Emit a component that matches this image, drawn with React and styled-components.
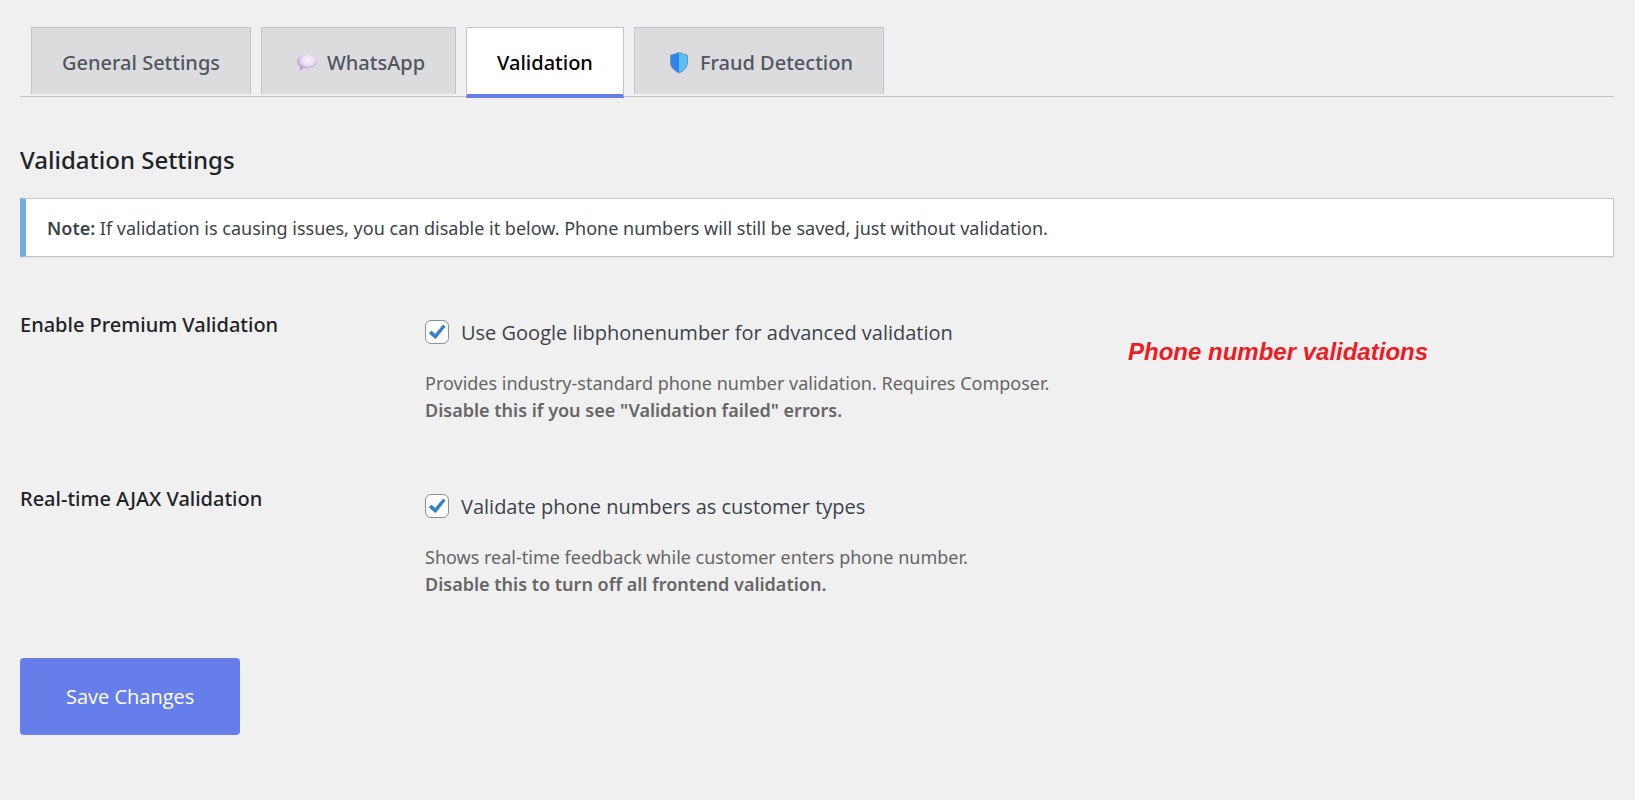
import React, { useState } from 'react';
import styled, { createGlobalStyle } from 'styled-components';

const GlobalStyle = createGlobalStyle`
  *, *::before, *::after { box-sizing: border-box; }
  body {
    margin: 0;
    background: #f0f0f0;
    color: #3c434a;
    font-family: "Open Sans", "Noto Sans", sans-serif;
    font-size: 20px;
    line-height: 30px;
  }
`;

const medium = '"Noto Sans", "Open Sans", sans-serif';

const Page = styled.div`
  padding: 27px 21px 40px 20px;
`;

const Tabs = styled.nav`
  display: flex;
  align-items: flex-start;
  gap: 10px;
  height: 70px;
  padding-left: 11px;
  border-bottom: 1px solid #c3c4c7;
`;

const Tab = styled.a`
  display: flex;
  align-items: center;
  gap: 7px;
  padding: 20px 30px 16px;
  border: 1px solid #c3c4c7;
  border-bottom: ${({ $active }) => ($active ? '4px solid #667eea' : '0')};
  background: ${({ $active }) => ($active ? '#fff' : '#dcdcde')};
  color: ${({ $active }) => ($active ? '#000' : '#50575e')};
  font-family: ${medium};
  font-weight: 500;
  text-decoration: none;
  white-space: nowrap;
`;

const TabIcon = styled.svg`
  width: 28px;
  height: 24px;
`;

const Title = styled.h2`
  margin: 46px 0 22px;
  color: #1d2327;
  font-family: ${medium};
  font-size: 24px;
  font-weight: 500;
  line-height: 33px;
`;

const Notice = styled.p`
  margin: 0;
  padding: 14px 21px 13px;
  border: 1px solid #c3c4c7;
  border-left: 6px solid #72aee6;
  background: #fff;
  box-shadow: 0 1px 1px rgba(0, 0, 0, 0.04);
  font-family: ${medium};
  font-size: 18px;

  strong { font-weight: 600; }
`;

const Form = styled.form`
  padding-top: 31px;
`;

const Row = styled.div`
  display: grid;
  grid-template-columns: 405px minmax(0, 703px) auto;
  justify-content: start;
  padding: 22px 0 38px;
`;

const RowLabel = styled.label`
  color: #1d2327;
  font-family: ${medium};
  font-weight: 500;
`;

const Field = styled.div`
  padding-top: 8px;
`;

const Option = styled.label`
  display: flex;
  align-items: center;
  gap: 12px;
`;

const CheckWrap = styled.span`
  display: grid;
  width: 24px;
  height: 24px;
  margin-bottom: 2px;

  > * { grid-area: 1 / 1; }
`;

const Checkbox = styled.input`
  appearance: none;
  width: 24px;
  height: 24px;
  margin: 0;
  border: 1px solid #8c8f94;
  border-radius: 6px;
  background: #fff;
`;

const Tick = styled.svg`
  width: 24px;
  height: 24px;
  pointer-events: none;
`;

const Description = styled.p`
  margin: 22px 0 0;
  color: #666;
  font-family: ${medium};
  font-size: 18px;
  line-height: 27px;

  strong {
    display: block;
    font-weight: 600;
  }
`;

const Annotation = styled.em`
  padding-top: 27px;
  color: #ed1c24;
  font-family: "Liberation Sans", Arial, sans-serif;
  font-size: 24px;
  font-weight: 700;
  white-space: nowrap;
`;

const SaveButton = styled.button`
  margin-top: 22px;
  padding: 24px 46px 23px;
  border: 0;
  border-radius: 4px;
  background: #667eea;
  color: #fff;
  font: inherit;
`;

function BubbleIcon() {
  return (
    <TabIcon viewBox="0 0 28 24" aria-hidden="true">
      <defs>
        <radialGradient id="bubble" cx="55%" cy="36%" r="60%">
          <stop offset="0" stopColor="#f8f3fc" />
          <stop offset="0.55" stopColor="#e8dcf2" />
          <stop offset="1" stopColor="#b39bcc" />
        </radialGradient>
      </defs>
      <path
        d="M15 3.700c5.700 0 10.100 3 10.100 6.900s-4.400 6.900-10.100 6.900c-1.200 0-2.400-.1-3.400-.4-.9 1-2 1.700-3.500 1.900-.5 0-.6-.4-.3-.8.4-.6.5-1.500.4-2.300C6.200 14.700 4.900 12.700 4.900 10.600 4.900 6.700 9.300 3.700 15 3.700z"
        fill="url(#bubble)"
      />
    </TabIcon>
  );
}

function ShieldIcon() {
  return (
    <TabIcon viewBox="0 0 28 24" aria-hidden="true">
      <path
        d="M14 1.500c2.300 0 3.200 1.800 7.300 2.200.8.100 1.200.5 1.200 1.300v6.500c0 4.500-3.500 8.100-8.500 10.600-5-2.500-8.500-6.100-8.500-10.600V5c0-.8.4-1.200 1.200-1.300 4.100-.4 5-2.200 7.300-2.200z"
        fill="#2f83e8"
      />
      <path
        d="M14 1.500c2.300 0 3.200 1.800 7.300 2.200.8.100 1.200.5 1.200 1.300v6.500c0 4.500-3.500 8.100-8.500 10.600z"
        fill="#57c3fb"
      />
      <path
        d="M14 1.500c2.300 0 3.200 1.800 7.300 2.200.8.100 1.200.5 1.200 1.300v6.500c0 4.500-3.500 8.100-8.500 10.600-5-2.500-8.500-6.100-8.500-10.600V5c0-.8.4-1.200 1.200-1.300 4.100-.4 5-2.200 7.300-2.200z"
        fill="none"
        stroke="#7c92ab"
        strokeWidth="0.900"
      />
    </TabIcon>
  );
}

function Setting({ id, title, option, description, warning, note }) {
  const [checked, setChecked] = useState(true);
  return (
    <Row>
      <RowLabel htmlFor={id}>{title}</RowLabel>
      <Field>
        <Option>
          <CheckWrap>
            <Checkbox
              id={id}
              type="checkbox"
              checked={checked}
              onChange={(event) => setChecked(event.target.checked)}
            />
            {checked && (
              <Tick viewBox="0 0 24 24" aria-hidden="true">
                <path
                  d="M4.200 12.700l2-1.600c.3-.2.700-.2 1 .1l2.900 2.900 7.600-9c.3-.3.600-.3.900-.1l1.500 1.200c.3.200.3.600.1.900l-9.100 11.500c-.4.500-1 .5-1.400 0L4.100 13.600c-.3-.3-.2-.7.100-.9z"
                  fill="#3582c4"
                />
              </Tick>
            )}
          </CheckWrap>
          {option}
        </Option>
        <Description>
          {description}
          <strong>{warning}</strong>
        </Description>
      </Field>
      {note && <Annotation>{note}</Annotation>}
    </Row>
  );
}

export default function App() {
  return (
    <>
      <GlobalStyle />
      <Page>
        <Tabs>
          <Tab href="#general">General Settings</Tab>
          <Tab href="#whatsapp"><BubbleIcon />WhatsApp</Tab>
          <Tab href="#validation" $active aria-current="page">Validation</Tab>
          <Tab href="#fraud"><ShieldIcon />Fraud Detection</Tab>
        </Tabs>
        <Title>Validation Settings</Title>
        <Notice>
          <strong>Note:</strong> If validation is causing issues, you can disable it below. Phone
          numbers will still be saved, just without validation.
        </Notice>
        <Form onSubmit={(event) => event.preventDefault()}>
          <Setting
            id="premium"
            title="Enable Premium Validation"
            option="Use Google libphonenumber for advanced validation"
            description="Provides industry-standard phone number validation. Requires Composer."
            warning={'Disable this if you see "Validation failed" errors.'}
            note="Phone number validations"
          />
          <Setting
            id="ajax"
            title="Real-time AJAX Validation"
            option="Validate phone numbers as customer types"
            description="Shows real-time feedback while customer enters phone number."
            warning="Disable this to turn off all frontend validation."
          />
          <SaveButton type="submit">Save Changes</SaveButton>
        </Form>
      </Page>
    </>
  );
}
